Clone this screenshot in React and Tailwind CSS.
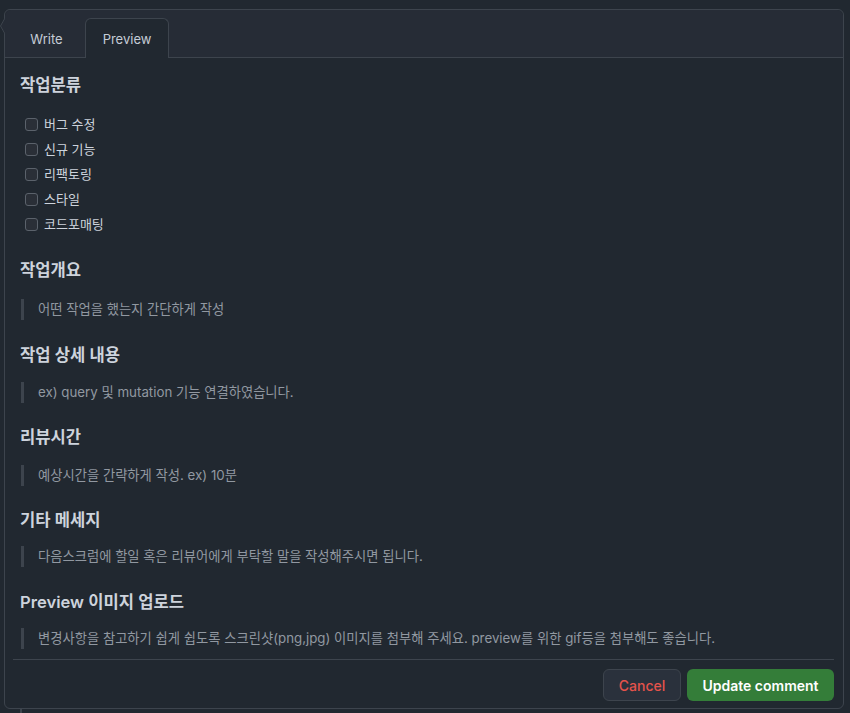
import React from 'react';

const font = { fontFamily: 'Inter, "Noto Sans CJK KR", sans-serif' };

const tasks = ['버그 수정', '신규 기능', '리팩토링', '스타일', '코드포매팅'];

const sections = [
  { title: '작업개요', note: '어떤 작업을 했는지 간단하게 작성', hm: 'mt-[21px]', qm: 'mt-[17px]' },
  { title: '작업 상세 내용', note: 'ex) query 및 mutation 기능 연결하였습니다.', hm: 'mt-[23px]', qm: 'mt-[15px]' },
  { title: '리뷰시간', note: '예상시간을 간략하게 작성. ex) 10분', hm: 'mt-[22px]', qm: 'mt-[16px]' },
  {
    title: '기타 메세지',
    note: '다음스크럼에 할일 혹은 리뷰어에게 부탁할 말을 작성해주시면 됩니다.',
    hm: 'mt-[22px]',
    qm: 'mt-[14px]',
  },
  {
    title: 'Preview 이미지 업로드',
    note: '변경사항을 참고하기 쉽게 쉽도록 스크린샷(png,jpg) 이미지를 첨부해 주세요. preview를 위한 gif등을 첨부해도 좋습니다.',
    hm: 'mt-[23px]',
    qm: 'mt-[14px]',
  },
];

const Heading = ({ children, className = '' }) => (
  <h3 className={`h-6 text-[16.6px] leading-6 font-semibold text-[#cdd3dc] ${className}`}>{children}</h3>
);

const App = () => {
  return (
    <div className="min-h-screen bg-[#212830] pt-[9px] pl-[4px] relative overflow-hidden" style={font}>
      {/* comment arrow */}
      <svg className="absolute left-0 top-[18px]" width="5" height="16" viewBox="0 0 5 16">
        <path d="M5 0 L0.5 8 L5 16 Z" fill="#262c36" />
        <path d="M5 0 L0.5 8 L5 16" fill="none" stroke="#3d444d" strokeWidth="1" />
      </svg>

      <div className="w-[840px] h-[700px] border border-[#3d444d] rounded-md flex flex-col overflow-hidden">
        {/* Tabs */}
        <div className="h-[48px] shrink-0 bg-[#262c36] border-b border-[#3d444d] flex items-end pl-[9px] gap-[6px] rounded-t-md">
          <div className="h-[39px] w-[65px] pt-[4px] flex items-center justify-center text-[13px] text-[#c5ccd6]">Write</div>
          <div className="h-[40px] -mb-px w-[84px] pt-[2px] flex items-center justify-center text-[13px] text-[#c5ccd6] bg-[#212830] border-x border-t border-[#3d444d] rounded-t-md">
            Preview
          </div>
        </div>

        {/* Preview body */}
        <div className="flex-1 overflow-hidden pl-[15px] pr-4 pt-[15px]">
          <Heading>작업분류</Heading>
          <ul className="mt-[15px]">
            {tasks.map((t) => (
              <li key={t} className="h-[25px] flex items-center gap-[6px] pl-[5px]">
                <span className="w-[13px] h-[13px] rounded-[3px] border border-[#5b626b] bg-[#2a2f37]" />
                <span className="text-[13px] text-[#cdd3dc]">{t}</span>
              </li>
            ))}
          </ul>
          {sections.map((s) => (
            <div key={s.title}>
              <Heading className={s.hm}>{s.title}</Heading>
              <blockquote
                className={`${s.qm} ml-px border-l-[3px] border-[#3d444d] pl-[14px] h-[21px] leading-[21px] text-[13.3px] text-[#9198a1] whitespace-nowrap`}
              >
                {s.note}
              </blockquote>
            </div>
          ))}
        </div>

        {/* Footer */}
        <div className="ml-2 mr-[9px] border-t border-[#3d444d] pt-[9px] pb-[7px] flex justify-end gap-[6px]">
          <button className="h-8 w-[78px] rounded-md bg-[#2a313c] border border-[#3d444d] text-[14px] font-medium text-[#e5534b]">
            Cancel
          </button>
          <button className="h-8 w-[147px] rounded-md bg-[#347d39] text-[14px] font-semibold text-white">
            Update comment
          </button>
        </div>
      </div>

      {/* timeline line */}
      <div className="ml-[16px] w-[2px] h-[8px] bg-[#3d444d]" />
    </div>
  );
};

export default App;
